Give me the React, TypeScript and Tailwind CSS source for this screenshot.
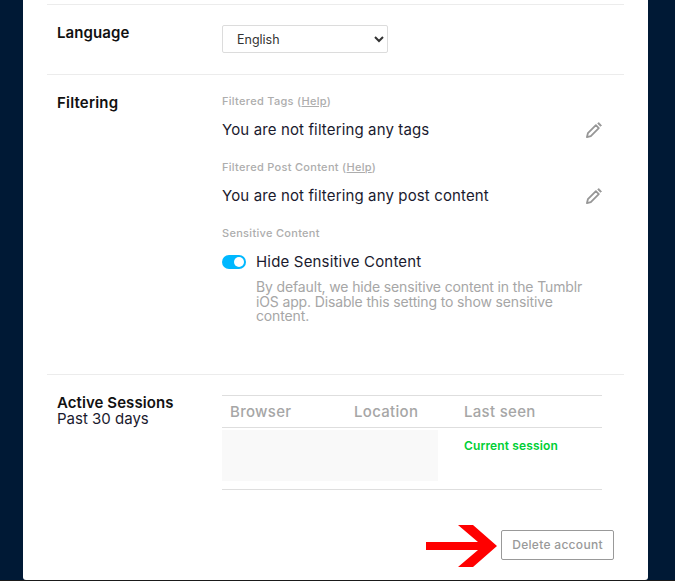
import React from 'react';

const PencilIcon: React.FC = () => (
  <svg viewBox="0 0 16 16" className="w-4 h-4 shrink-0" fill="none" stroke="#969696">
    <path d="M.9 15.1l1-3.9 8-8 2.9 2.9-8 8z" strokeWidth="1.8" strokeLinejoin="round" />
    <path d="M11.7 1.5l1-1 2.8 2.8-1 1z" fill="#969696" strokeWidth=".8" />
  </svg>
);

const SmallLabel: React.FC<{ children: React.ReactNode }> = ({ children }) => (
  <div className="text-[11px] leading-[14px] tracking-[0.3px] text-[#adadad] font-medium">{children}</div>
);

const FilterRow: React.FC<{ label: string; text: string }> = ({ label, text }) => (
  <div>
    <SmallLabel>
      {label} (<span className="underline">Help</span>)
    </SmallLabel>
    <div className="flex items-center justify-between h-[20px] mt-[12px] pr-[22px]">
      <span className="text-[15px] tracking-[0.13px] text-[#1a1a2e]">{text}</span>
      <PencilIcon />
    </div>
  </div>
);

export default function App() {
  return (
    <div className="h-[581px] w-[675px] overflow-hidden bg-[#001935] font-['Inter',sans-serif] relative">
      <div className="ml-[23px] w-[625px] h-[580px] bg-white rounded-b-[3px] px-[24px] pt-[4px]">
        <div className="border-t border-[#ececec] h-[70px] flex">
          <div className="w-[175px] pl-[10px] pt-[19px] text-[15px] leading-[18px] tracking-[0.1px] font-semibold text-[#111]">Language</div>
          <div className="pt-[20px]">
            <select className="w-[166px] h-[28px] pl-[10px] pr-[6px] border border-[#dcdcdc] rounded-[2px] bg-white text-[12.5px] text-[#333]">
              <option>English</option>
            </select>
          </div>
        </div>

        <div className="border-t border-[#ececec] h-[300px] flex">
          <div className="w-[175px] pl-[10px] pt-[19px] text-[15px] leading-[18px] tracking-[0.2px] font-semibold text-[#111]">Filtering</div>
          <div className="flex-1 pt-[19px]">
            <FilterRow label="Filtered Tags" text="You are not filtering any tags" />
            <div className="mt-[20px]">
              <FilterRow label="Filtered Post Content" text="You are not filtering any post content" />
            </div>
            <div className="mt-[20px]">
              <SmallLabel>Sensitive Content</SmallLabel>
              <div className="flex items-center gap-[10px] h-[20px] mt-[12px]">
                <div className="w-[24px] h-[14px] rounded-full bg-[#00b8ff] flex items-center justify-end pr-[2px]">
                  <div className="w-[10px] h-[10px] rounded-full bg-white" />
                </div>
                <span className="text-[15px] tracking-[0.18px] text-[#1a1a2e]">Hide Sensitive Content</span>
              </div>
              <p className="ml-[34px] mt-[8px] w-[335px] text-[14px] leading-[14.5px] tracking-[-0.14px] text-[#a6a6a6]">
                By default, we hide sensitive content in the Tumblr iOS app. Disable this setting to show sensitive content.
              </p>
            </div>
          </div>
        </div>

        <div className="border-t border-[#ececec] flex">
          <div className="w-[175px] pl-[10px] pt-[20px]">
            <div className="text-[15px] leading-[16px] tracking-[0.07px] font-semibold text-[#111]">Active Sessions</div>
            <div className="text-[15px] leading-[16px] text-[#1a1a2e]">Past 30 days</div>
          </div>
          <div className="w-[380px] mt-[20px]">
            <div className="border-y border-[#dedede] h-[33px] flex items-center pl-[8px] pt-[2px] text-[15px] tracking-[0.3px] font-medium text-[#a6a6a6]">
              <span className="w-[124px]">Browser</span>
              <span className="w-[110px]">Location</span>
              <span>Last seen</span>
            </div>
            <div className="border-b border-[#dedede] h-[62px] pt-[2px] flex">
              <div className="w-[216px] h-[51px] bg-[#f9f9f9]" />
              <div className="ml-[26px] pt-[8px] text-[12px] leading-[16px] tracking-[0.13px] font-semibold text-[#00cf35]">Current session</div>
            </div>
          </div>
        </div>

        <div className="flex justify-end pr-[10px] mt-[40px]">
          <button className="w-[113px] h-[30px] border border-[#999] rounded-[2px] bg-white text-[12px] tracking-[0.3px] text-[#999] font-medium">
            Delete account
          </button>
        </div>
      </div>

      <div className="absolute left-0 right-0 bottom-0 h-[1px] bg-[#1a1a1a]" />

      <svg className="absolute left-[426px] top-[525px] w-[71px] h-[42px]" viewBox="426 525 71 42">
        <polygon points="426,542 478,542 458,525 473,525 497,546 473,567 458,567 478,550 426,550" fill="#ff0000" />
      </svg>
    </div>
  );
}
